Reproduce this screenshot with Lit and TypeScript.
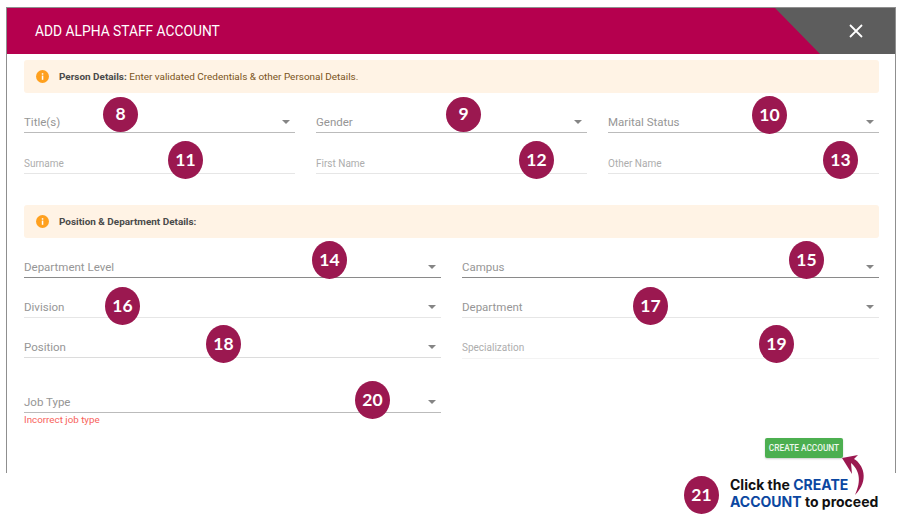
import { LitElement, html, css } from "lit";
import { customElement } from "lit/decorators.js";

const BADGES: [string, number, number, number, number][] = [
  ["8", 103, 97, 35, 35],
  ["9", 446, 97, 35, 35],
  ["10", 752, 96, 35, 38],
  ["11", 168, 141, 35, 38],
  ["12", 519, 141, 35, 38],
  ["13", 823, 141, 35, 38],
  ["14", 312, 241, 35, 38],
  ["15", 789, 241, 35, 38],
  ["16", 105, 287, 35, 38],
  ["17", 633, 287, 35, 38],
  ["18", 206, 325, 35, 38],
  ["19", 759, 325, 35, 38],
  ["20", 355, 381, 35, 38],
  ["21", 684, 476, 35, 38],
];

@customElement("app-root")
export class AppRoot extends LitElement {
  static styles = css`
    :host {
      display: block;
      position: relative;
      width: 899px;
      height: 516px;
      overflow: hidden;
      background: #fff;
      font-family: Roboto, "Liberation Sans", sans-serif;
    }
    .dialog {
      box-sizing: border-box;
      width: 890px;
      height: 466px;
      margin: 7px 0 0 6px;
      border: 1px solid #8f8f8f;
      border-bottom: none;
      display: flex;
      flex-direction: column;
    }
    .header {
      height: 46px;
      flex: none;
      background: #b5004e;
      display: flex;
      justify-content: space-between;
      align-items: stretch;
    }
    .title {
      margin: 0 0 0 28px;
      align-self: center;
      color: #fff;
      font-size: 13.8px;
      font-weight: 400;
    }
    .corner {
      width: 120px;
      background: #5d5d5d;
      clip-path: polygon(0 0, 100% 0, 100% 100%, 45px 100%);
      display: flex;
      align-items: center;
      justify-content: flex-end;
      padding-right: 32px;
      box-sizing: border-box;
    }
    .corner svg {
      display: block;
    }
    .body {
      flex: 1;
      padding: 6px 16px 0 17px;
      display: flex;
      flex-direction: column;
    }
    .alert {
      height: 33px;
      flex: none;
      box-sizing: border-box;
      background: #fff3e5;
      border-radius: 3px;
      display: flex;
      align-items: center;
      padding-left: 12px;
      gap: 10px;
      font-size: 9.95px;
      color: #7a5420;
    }
    .alert b {
      font-weight: 700;
      color: #4a4a4a;
    }
    .alert svg {
      flex: none;
    }
    .second {
      margin-top: 31px;
    }
    .three {
      display: grid;
      grid-template-columns: repeat(3, 271px);
      column-gap: 21px;
    }
    .two {
      display: grid;
      grid-template-columns: repeat(2, 417px);
      column-gap: 21px;
      row-gap: 10px;
      margin-top: 10px;
    }
    .row1 {
      margin-top: 10px;
    }
    .row2 {
      margin-top: 11px;
    }
    .field {
      box-sizing: border-box;
      height: 30px;
      border-bottom: 1px solid #bbb;
      display: flex;
      align-items: center;
      justify-content: space-between;
      padding: 9px 5px 0 0;
      font-size: 11.5px;
      color: #969696;
    }
    .caret {
      width: 0;
      height: 0;
      border-left: 4px solid transparent;
      border-right: 4px solid transparent;
      border-top: 4px solid #858585;
    }
    .input {
      font-size: 10px;
      color: #adadad;
    }
    .soft {
      border-bottom-color: #e6e6e6;
    }
    .softer {
      border-bottom-color: #dcdcdc;
    }
    .strong {
      border-bottom-color: #8a8a8a;
    }
    .spec {
      height: 31px;
      margin-bottom: -1px;
      border-bottom-color: #f3f3f3;
    }
    .job {
      margin-top: 25px;
      width: 417px;
    }
    .error {
      margin-top: 1px;
      font-size: 9.8px;
      line-height: 12px;
      color: #f8635b;
    }
    .actions {
      display: flex;
      justify-content: flex-end;
      margin-top: 12px;
      padding-right: 36px;
    }
    .create {
      box-sizing: border-box;
      width: 78px;
      height: 20px;
      padding: 0;
      border: none;
      border-radius: 2px;
      background: #4caf50;
      color: #eef7ee;
      font-family: inherit;
      font-size: 8.3px;
      font-weight: 500;
      box-shadow: 0 1px 2px rgba(0, 0, 0, 0.2);
    }
    .badge {
      position: absolute;
      border-radius: 50%;
      background: #9b1850;
      color: #fff;
      font-family: Lato, "Open Sans", sans-serif;
      font-weight: 700;
      font-size: 17.5px;
      display: flex;
      align-items: center;
      justify-content: center;
      padding-bottom: 2px;
      box-sizing: border-box;
    }
    .hint {
      position: absolute;
      left: 730px;
      top: 476px;
      margin: 0;
      font-family: Inter, "Open Sans", sans-serif;
      font-weight: 700;
      font-size: 14px;
      line-height: 17px;
      color: #111;
      white-space: nowrap;
    }
    .hint em {
      font-style: normal;
      color: #0b47a1;
    }
    .arrow {
      position: absolute;
      left: 835px;
      top: 450px;
    }
  `;

  private info() {
    return html`<svg width="13" height="13" viewBox="0 0 13 13">
      <circle cx="6.5" cy="6.5" r="6.5" fill="#ffa01e"></circle>
      <rect x="5.8" y="5.6" width="1.5" height="4.2" fill="#fff"></rect>
      <rect x="5.8" y="3.2" width="1.5" height="1.5" fill="#fff"></rect>
    </svg>`;
  }

  private select(label: string, cls = "") {
    return html`<div class="field ${cls}"><span>${label}</span><i class="caret"></i></div>`;
  }

  private input(label: string, cls = "soft") {
    return html`<div class="field input ${cls}"><span>${label}</span></div>`;
  }

  render() {
    return html`
      <section class="dialog">
        <header class="header">
          <h1 class="title">ADD ALPHA STAFF ACCOUNT</h1>
          <div class="corner">
            <svg width="14" height="14" viewBox="0 0 14 14">
              <path d="M1 1 L13 13 M13 1 L1 13" stroke="#fff" stroke-width="1.8" fill="none"></path>
            </svg>
          </div>
        </header>
        <div class="body">
          <div class="alert">
            ${this.info()}
            <span><b>Person Details:</b> Enter validated Credentials &amp; other Personal Details.</span>
          </div>
          <div class="three row1">
            ${this.select("Title(s)")} ${this.select("Gender")} ${this.select("Marital Status")}
          </div>
          <div class="three row2">
            ${this.input("Surname")} ${this.input("First Name")} ${this.input("Other Name")}
          </div>
          <div class="alert second">
            ${this.info()}
            <span><b>Position &amp; Department Details:</b></span>
          </div>
          <div class="two">
            ${this.select("Department Level", "strong")} ${this.select("Campus", "strong")}
            ${this.select("Division", "soft")} ${this.select("Department", "soft")}
            ${this.select("Position", "softer")} ${this.input("Specialization", "spec")}
          </div>
          <div class="job">${this.select("Job Type")}</div>
          <div class="error">Incorrect job type</div>
          <div class="actions"><button class="create">CREATE ACCOUNT</button></div>
        </div>
      </section>
      ${BADGES.map(
        ([n, x, y, w, h]) =>
          html`<div class="badge" style="left:${x}px;top:${y}px;width:${w}px;height:${h}px">${n}</div>`
      )}
      <p class="hint">Click the <em>CREATE</em><br /><em>ACCOUNT</em> to proceed</p>
      <svg class="arrow" width="36" height="50" viewBox="0 0 36 50">
        <path d="M7 8 L23 5 L19 9 C28 14 35 30 20 45 C27 30 24 20 16 13 L17 24 Z" fill="#9b1850"></path>
      </svg>
    `;
  }
}
